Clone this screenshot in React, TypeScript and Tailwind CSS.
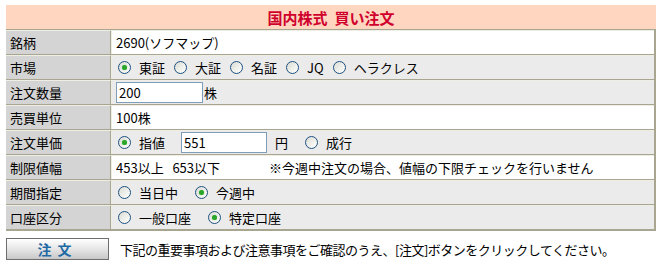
import React from "react";

const font = { fontFamily: '"Noto Sans CJK JP", "Liberation Sans", sans-serif' };

const Radio = ({ checked }: { checked?: boolean }) => (
  <span className="inline-flex items-center justify-center w-[13px] h-[13px] rounded-full border border-[#1c5180] bg-gradient-to-br from-[#dcdcd5] to-[#ffffff] shrink-0">
    {checked && <span className="w-[5px] h-[5px] rounded-full bg-[#2aa52a] shadow-[0_0_1px_#6fd36f]" />}
  </span>
);

const Opt = ({ checked, label, gap = "mr-[9px]" }: { checked?: boolean; label: string; gap?: string }) => (
  <span className={`inline-flex items-center ${gap}`}>
    <Radio checked={checked} />
    <span className="ml-[8px]">{label}</span>
  </span>
);

const Row = ({
  label,
  grey,
  children,
}: {
  label: string;
  grey?: boolean;
  children: React.ReactNode;
}) => (
  <div className="flex h-[25px] border-t border-[#a8a690]">
    <div className="w-[105px] bg-[#d4d4d4] border-t border-[#efeee4] flex items-center pl-[4px] border-r border-r-[#a8a690]">
      {label}
    </div>
    <div
      className={`flex-1 flex items-center border-t border-[#efeee4] border-l border-l-[#efeee4] pl-[4px] ${
        grey ? "bg-[#ebebeb]" : "bg-white"
      }`}
    >
      {children}
    </div>
  </div>
);

export default function App() {
  return (
    <div className="w-[662px] h-[268px] bg-white text-[13px] text-black leading-none" style={font}>
      <div className="ml-[6px] pt-[5px] w-[650px]">
        <div className="h-[24px] bg-[#ffd7c0] flex items-center justify-center text-[#d0002c] font-bold text-[15px]">
          国内株式&nbsp;&nbsp;買い注文
        </div>
        <div className="border-r-2 border-b-2 border-[#a8a690]">
          <Row label="銘柄">2690(ソフマップ)</Row>
          <Row label="市場" grey>
            <span className="pl-[2px] flex items-center">
              <Opt checked label="東証" />
              <Opt label="大証" />
              <Opt label="名証" />
              <Opt label="JQ" />
              <Opt label="ヘラクレス" />
            </span>
          </Row>
          <Row label="注文数量" grey>
            <span className="inline-block w-[87px] h-[21px] border border-[#7f9db9] bg-white pl-[2px] pt-[3px]">200</span>
            <span className="ml-[1px]">株</span>
          </Row>
          <Row label="売買単位">100株</Row>
          <Row label="注文単価" grey>
            <span className="pl-[2px] flex items-center">
              <Opt checked label="指値" gap="mr-[16px]" />
              <span className="inline-block w-[86px] h-[21px] border border-[#7f9db9] bg-white pl-[2px] pt-[3px]">551</span>
              <span className="ml-[8px] mr-[17px]">円</span>
              <Opt label="成行" />
            </span>
          </Row>
          <Row label="制限値幅">
            <span className="w-[153px]">453以上&nbsp;&nbsp;&nbsp;653以下</span>
            <span>※今週中注文の場合、値幅の下限チェックを行いません</span>
          </Row>
          <Row label="期間指定" grey>
            <span className="pl-[2px] flex items-center">
              <Opt label="当日中" gap="mr-[17px]" />
              <Opt checked label="今週中" />
            </span>
          </Row>
          <Row label="口座区分" grey>
            <span className="pl-[2px] flex items-center">
              <Opt label="一般口座" gap="mr-[17px]" />
              <Opt checked label="特定口座" />
            </span>
          </Row>
        </div>
        <div className="flex items-center mt-[7px]">
          <button className="w-[103px] h-[22px] border border-[#6e6e6e] bg-gradient-to-b from-[#ffffff] via-[#e6e6e6] to-[#c8c8c8] text-[#1f6aa5] font-bold text-[14px] tracking-[6px] flex items-center justify-center">
            注文
          </button>
          <span className="ml-[11px] tracking-[-0.5px]">
            下記の重要事項および注意事項をご確認のうえ、[注文]ボタンをクリックしてください。
          </span>
        </div>
      </div>
    </div>
  );
}
